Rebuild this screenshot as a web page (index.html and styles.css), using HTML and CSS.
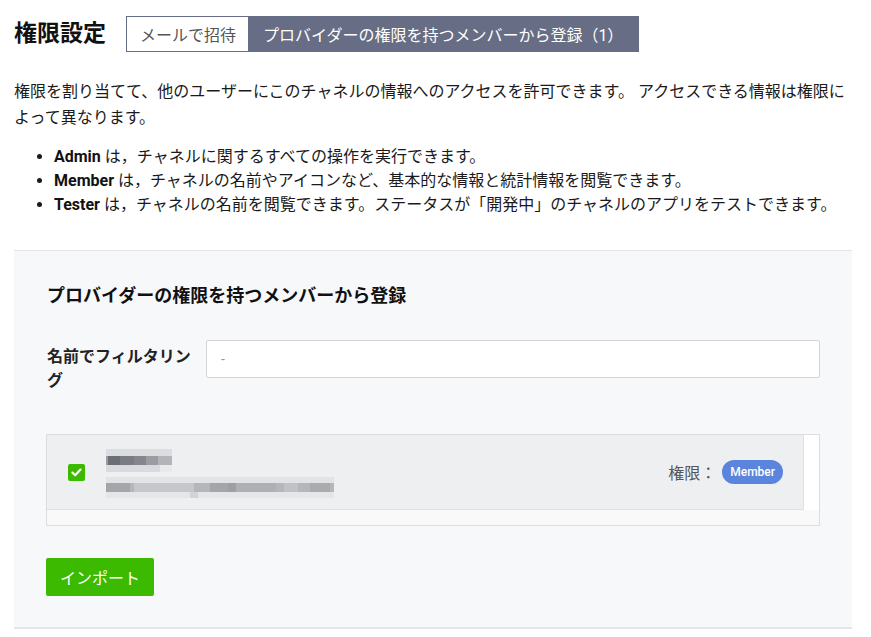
FILE: index.html
```html
<!DOCTYPE html>
<html lang="ja">
<head>
<meta charset="utf-8">
<title>権限設定</title>
<link rel="stylesheet" href="styles.css">
</head>
<body>
<div class="page">
  <div class="header">
    <h1 class="title">権限設定</h1>
    <div class="tabs">
      <div class="tab">メールで招待</div>
      <div class="tab tab-active">プロバイダーの権限を持つメンバーから登録（1）</div>
    </div>
  </div>
  <p class="intro">権限を割り当てて、他のユーザーにこのチャネルの情報へのアクセスを許可できます。 アクセスできる情報は権限によって異なります。</p>
  <ul class="roles">
    <li><b>Admin</b> は，チャネルに関するすべての操作を実行できます。</li>
    <li><b>Member</b> は，チャネルの名前やアイコンなど、基本的な情報と統計情報を閲覧できます。</li>
    <li><b>Tester</b> は，チャネルの名前を閲覧できます。ステータスが「開発中」のチャネルのアプリをテストできます。</li>
  </ul>
  <section class="panel">
    <h2 class="panel-title">プロバイダーの権限を持つメンバーから登録</h2>
    <div class="form-row">
      <label class="form-label">名前でフィルタリング</label>
      <div class="input"><span class="input-dash">-</span></div>
    </div>
    <div class="list">
      <div class="list-inner">
        <div class="member">
          <span class="check">
            <svg width="11" height="9" viewBox="0 0 11 9"><path d="M1.5 4.6 L4.2 7.2 L9.5 1.6" fill="none" stroke="#fff" stroke-width="2.2" stroke-linecap="round" stroke-linejoin="round"/></svg>
          </span>
          <div class="member-info">
            <svg class="blur-name" width="72" height="26" viewBox="0 0 72 26">
              <rect x="0" y="0" width="72" height="26" fill="#eeeff1"/>
              <rect x="2" y="2" width="66" height="7" fill="#dcdde0"/>
              <rect x="2" y="9" width="66" height="9" fill="#9a9ca2"/>
              <rect x="4" y="9" width="12" height="9" fill="#6c6e75"/>
              <rect x="16" y="9" width="14" height="9" fill="#7a7c83"/>
              <rect x="30" y="9" width="12" height="9" fill="#84868c"/>
              <rect x="54" y="9" width="14" height="9" fill="#b2b4b8"/>
              <rect x="2" y="18" width="66" height="7" fill="#d9dadd"/>
              <rect x="56" y="18" width="12" height="7" fill="#e9eaec"/>
            </svg>
            <svg class="blur-mail" width="232" height="24" viewBox="0 0 232 24">
              <rect x="0" y="0" width="232" height="24" fill="#eeeff1"/>
              <rect x="2" y="2" width="228" height="6" fill="#e2e3e5"/>
              <rect x="2" y="8" width="228" height="9" fill="#b4b6ba"/>
              <rect x="2" y="8" width="24" height="9" fill="#a4a6aa"/>
              <rect x="30" y="8" width="60" height="9" fill="#c5c7ca"/>
              <rect x="106" y="8" width="18" height="9" fill="#a3a5a9"/>
              <rect x="124" y="8" width="8" height="9" fill="#9d9fa3"/>
              <rect x="132" y="8" width="40" height="9" fill="#aeb0b4"/>
              <rect x="180" y="8" width="14" height="9" fill="#c0c2c5"/>
              <rect x="206" y="8" width="20" height="9" fill="#a9abaf"/>
              <rect x="2" y="17" width="228" height="6" fill="#e5e6e8"/>
              <rect x="86" y="17" width="8" height="6" fill="#d3d4d7"/>
            </svg>
          </div>
          <div class="member-role">
            <span class="role-label">権限：</span>
            <span class="badge">Member</span>
          </div>
        </div>
      </div>
    </div>
    <button class="btn-import" type="button">インポート</button>
  </section>
</div>
</body>
</html>
```

FILE: styles.css
```css
* { box-sizing: border-box; }

body {
  margin: 0;
  background: #fff;
  color: #111;
  font-family: Roboto, "Noto Sans CJK JP", sans-serif;
  font-size: 16px;
}

.page {
  padding: 16px 19px 0 14px;
}

.header {
  display: flex;
  align-items: center;
  gap: 20px;
}

.title {
  margin: 0;
  font-size: 23px;
  font-weight: 700;
  line-height: 30px;
}

.tabs {
  display: flex;
  height: 36px;
}

.tab {
  display: flex;
  align-items: center;
  padding: 0 12px 0 13px;
  border: 1px solid #666d84;
  border-right: none;
  color: #555;
  font-size: 16px;
  background: #fff;
}

.tab-active {
  background: #666d84;
  color: #fff;
  padding: 0 16px 0 14px;
}

.intro {
  margin: 27px 0 0;
  font-size: 16px;
  line-height: 26px;
  color: #1a1a1a;
}

.roles {
  margin: 14px 0 0;
  padding-left: 40px;
  font-size: 16px;
  line-height: 24px;
  color: #1a1a1a;
}

.roles b {
  font-weight: 700;
  color: #111;
}

.panel {
  margin-top: 33px;
  background: #f7f8fa;
  border-top: 1px solid #e3e5e9;
  border-bottom: 2px solid #e3e5e9;
  padding: 32px 32px 31px 32px;
}

.panel-title {
  margin: 0;
  font-size: 18px;
  font-weight: 700;
  line-height: 26px;
  padding-left: 1px;
}

.form-row {
  display: flex;
  align-items: flex-start;
  gap: 14px;
  margin-top: 31px;
}

.form-label {
  width: 146px;
  flex: none;
  padding: 5px 0 0 1px;
  font-size: 16px;
  font-weight: 700;
  line-height: 24px;
  color: #222;
}

.input {
  flex: 1;
  height: 38px;
  background: #fff;
  border: 1px solid #d3d5d9;
  border-radius: 2px;
  display: flex;
  align-items: center;
  padding-left: 14px;
}

.input-dash {
  color: #999;
  font-size: 14px;
}

.list {
  margin-top: 41px;
  height: 92px;
  border: 1px solid #dcdde0;
  background: #fff;
  padding: 0 15px 15px 0;
  position: relative;
}

.list::after {
  content: "";
  position: absolute;
  left: 0;
  right: 0;
  bottom: 0;
  height: 15px;
  background: #f9f9fa;
}

.list-inner {
  height: 75px;
  background: #eeeff1;
  border-bottom: 1px solid #dfe0e3;
  border-right: 1px solid #dfe0e3;
}

.member {
  display: flex;
  align-items: center;
  height: 100%;
  padding: 0 20px 0 21px;
}

.check {
  width: 17px;
  height: 17px;
  flex: none;
  border-radius: 2px;
  background: #3cba00;
  display: flex;
  align-items: center;
  justify-content: center;
  margin-top: 1px;
}

.member-info {
  display: flex;
  flex-direction: column;
  gap: 2px;
  margin-left: 19px;
  margin-top: 2px;
}

.blur-name, .blur-mail { display: block; }

.member-role {
  margin-left: auto;
  display: flex;
  align-items: center;
  gap: 6px;
}

.role-label {
  color: #555;
  font-size: 16px;
}

.badge {
  display: inline-flex;
  align-items: center;
  height: 24px;
  padding: 0 8px;
  border-radius: 12px;
  background: #5b84dc;
  color: #fff;
  font-size: 12px;
  font-weight: 500;
}

.btn-import {
  display: block;
  margin-top: 32px;
  height: 38px;
  width: 108px;
  border: none;
  border-radius: 2px;
  background: #3cba00;
  color: #fff;
  font-family: inherit;
  font-size: 16px;
  font-weight: 400;
  padding: 0;
}
```
